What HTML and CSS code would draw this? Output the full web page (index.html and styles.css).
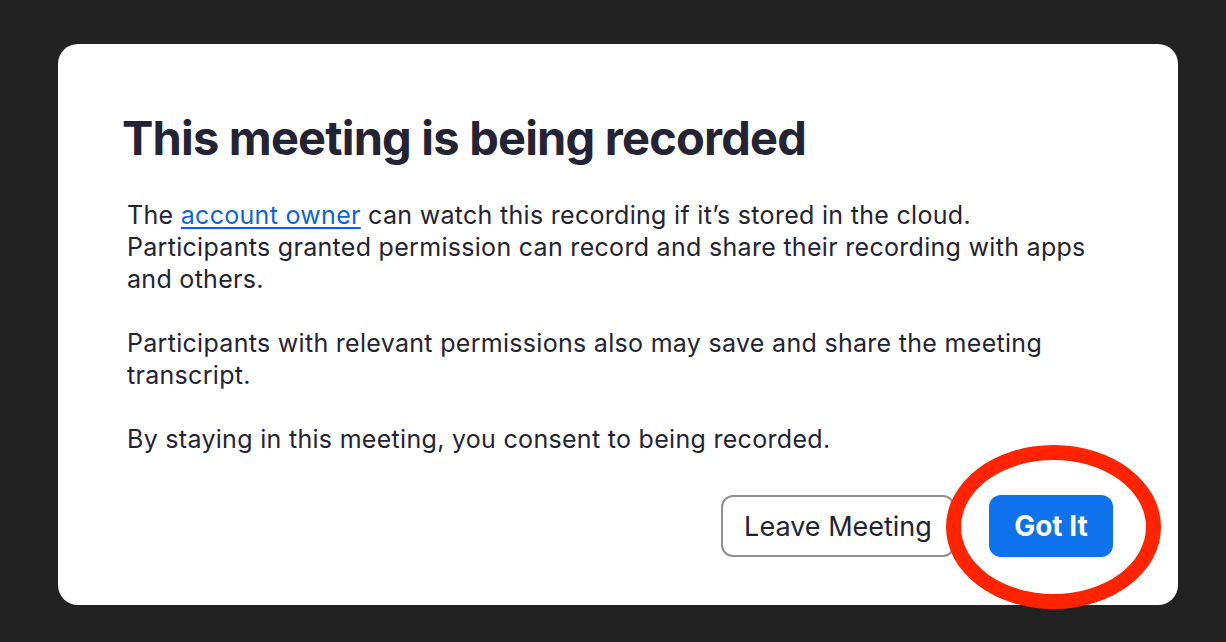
FILE: index.html
```html
<!DOCTYPE html>
<html>
<head>
<meta charset="utf-8">
<link rel="stylesheet" href="styles.css">
</head>
<body>
<div class="stage">
  <div class="dialog">
    <h1 class="title">This meeting is being recorded</h1>
    <div class="body">
      <p>The <a class="link" href="#">account owner</a> can watch this recording if it’s stored in the cloud. Participants granted permission can record and share their recording with apps and others.</p>
      <p>Participants with relevant permissions also may save and share the meeting transcript.</p>
      <p>By staying in this meeting, you consent to being recorded.</p>
    </div>
    <div class="actions">
      <button class="btn btn-secondary">Leave Meeting</button>
      <div class="primary-wrap">
        <button class="btn btn-primary">Got It</button>
        <div class="highlight"></div>
      </div>
    </div>
  </div>
</div>
</body>
</html>
```

FILE: styles.css
```css
html, body {
  margin: 0;
  padding: 0;
  background: #222222;
  width: 1226px;
  height: 642px;
  overflow: hidden;
}
.stage {
  padding: 44px 48px 37px 58px;
}
.dialog {
  background: #ffffff;
  border-radius: 20px;
  width: 1120px;
  height: 561px;
  box-sizing: border-box;
  padding: 66px 65px 0 64px;
  font-family: Inter, "Noto Sans", sans-serif;
  color: #232333;
}
.title {
  margin: 0;
  font-size: 47px;
  font-weight: 700;
  letter-spacing: -0.8px;
  line-height: 56px;
}
.body {
  margin-top: 33px;
  padding-left: 5px;
  width: 965px;
  font-size: 25px;
  letter-spacing: 0.3px;
  line-height: 32px;
}
.body p {
  margin: 0 0 32px 0;
}
.link {
  color: #0e65d8;
  text-decoration: underline;
  text-underline-offset: 3px;
}
.actions {
  display: flex;
  justify-content: flex-end;
  gap: 34px;
  margin-top: 40px;
}
.btn {
  font-family: Inter, "Noto Sans", sans-serif;
  font-size: 27px;
  height: 62px;
  border-radius: 12px;
  box-sizing: border-box;
  cursor: pointer;
  white-space: nowrap;
  padding: 0;
}
.btn-secondary {
  background: #fff;
  color: #232333;
  border: 2px solid #8f8f94;
  width: 234px;
}
.btn-primary {
  background: #0e72ed;
  color: #fff;
  border: none;
  font-weight: 700;
  font-size: 28px;
  width: 124px;
}
.primary-wrap {
  position: relative;
}
.highlight {
  position: absolute;
  left: -43px;
  top: -50px;
  width: 215px;
  height: 164px;
  border: 15px solid #ff2300;
  border-radius: 50%;
  box-sizing: border-box;
  pointer-events: none;
}
```
